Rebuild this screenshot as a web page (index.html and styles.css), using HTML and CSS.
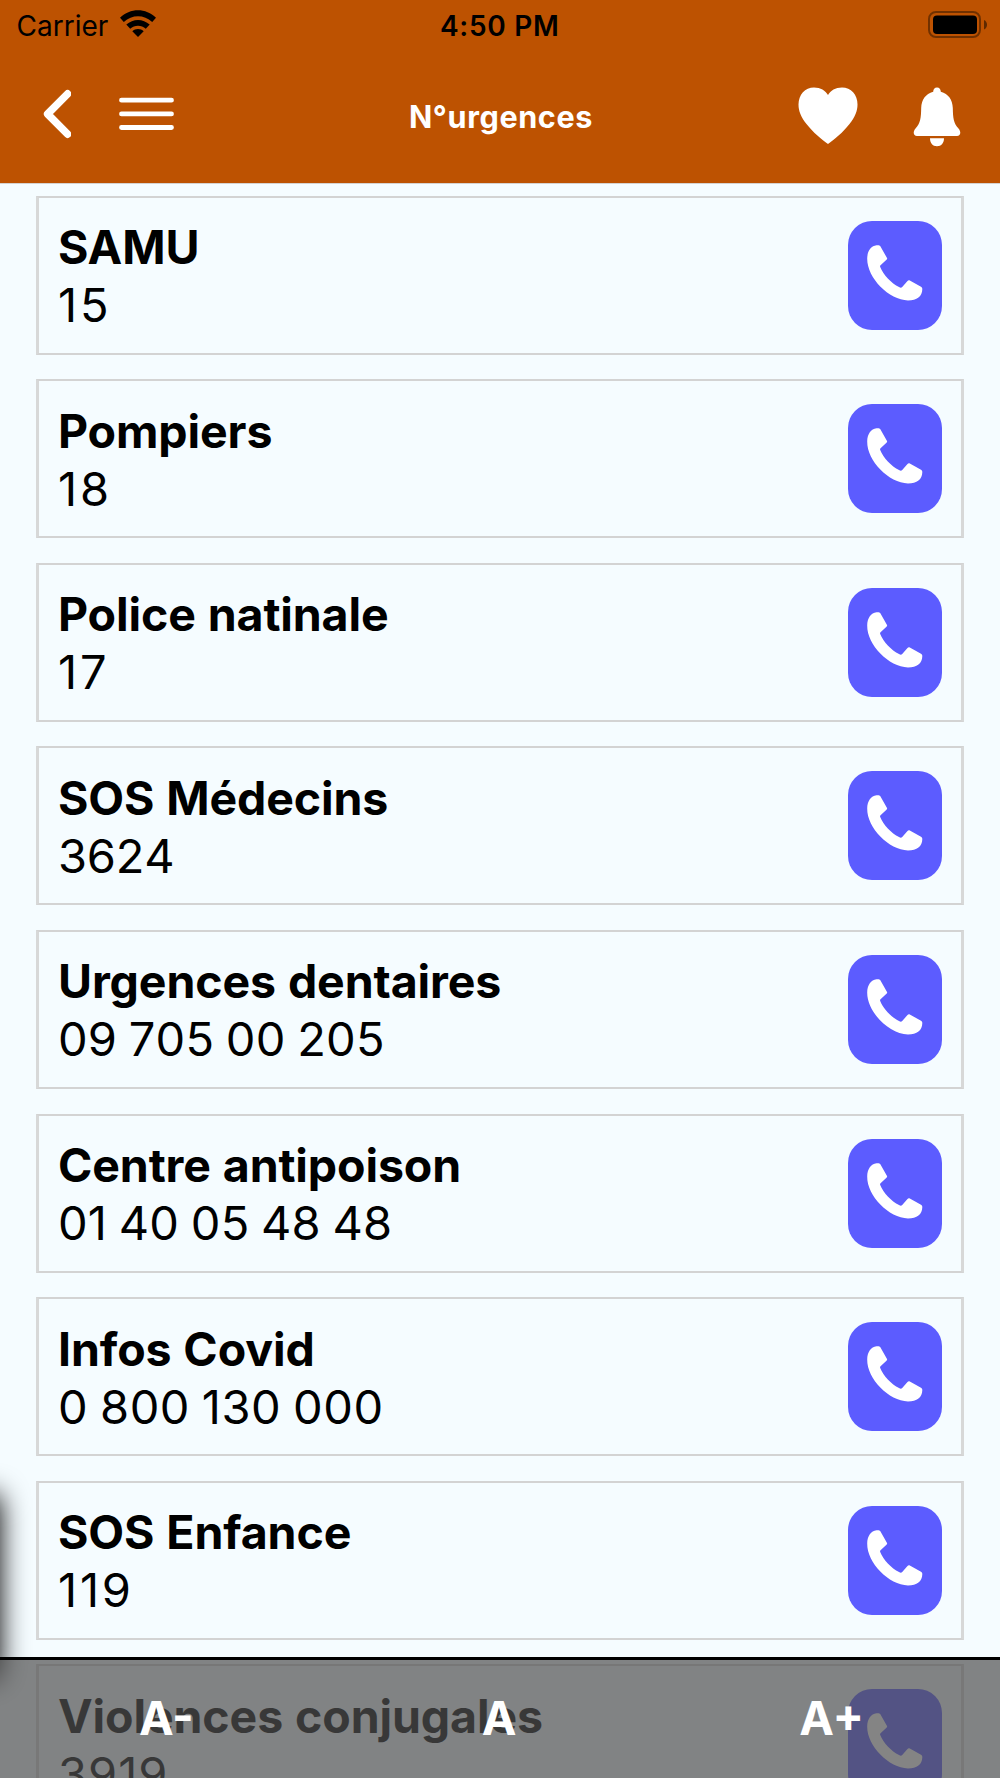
FILE: index.html
```html
<!DOCTYPE html>
<html lang="fr">
<head>
<meta charset="utf-8">
<title>N°urgences</title>
<link rel="stylesheet" href="styles.css">
</head>
<body>
<svg class="defs" width="0" height="0">
  <symbol id="phone" viewBox="0 0 56 56">
    <path d="M9.500 0.300 C11 0 12.600 0.100 13.200 1 L20 13 C20.300 13.600 20.200 14.100 19.700 14.600 L13.300 20.500 C13 20.900 13 21.500 13.200 22 C16 29.500 24.500 38.500 32 42 C33.300 42.900 34.300 42.900 35 42.200 L40.500 36 C41.200 35.200 42 35.100 42.800 35.500 L54 41.800 C55 42.400 55.300 43 55.300 44.200 C55.200 51.500 50 55.400 41 55.400 C22 55 0 33 0.200 13.500 C0.300 6 4 1 9.500 0.300Z"/>
  </symbol>
</svg>
<div class="screen">
  <header class="header">
    <div class="status">
      <div class="carrier">
        <span>Carrier</span>
        <svg class="wifi" width="38" height="28" viewBox="0 0 38 28">
          <path d="M1 7.800C11 -2.400 27 -2.400 37 7.800L33.200 12C25 4.200 13 4.200 4.800 12Z"/>
          <path d="M7.300 14.600C14 8.300 24 8.300 30.700 14.600L26.800 18.800C22.500 14.800 15.500 14.800 11.200 18.800Z"/>
          <path d="M13.300 21.200C16.300 18.400 21.700 18.400 24.700 21.200L19 27Z"/>
        </svg>
      </div>
      <span class="time">4:50 PM</span>
      <svg class="battery" width="60" height="28" viewBox="0 0 60 28">
        <rect class="battery-case" x="1" y="1" width="51" height="25" rx="7"/>
        <rect x="5" y="4.500" width="44" height="18.500" rx="4"/>
        <path class="battery-cap" d="M56 9C60 10.500 60 17 56 18.500Z"/>
      </svg>
    </div>
    <nav class="nav">
      <div class="nav-left">
        <svg class="back" width="30" height="50" viewBox="0 0 30 50"><path d="M26.600 4.800 6.600 25 26.600 45.200"/></svg>
        <svg class="menu" width="55" height="34" viewBox="0 0 55 34"><path d="M2.500 3.200H52.500M2.500 16.900H52.500M2.500 30.500H52.500"/></svg>
      </div>
      <h1 class="title">N°urgences</h1>
      <div class="nav-right">
        <svg width="60" height="58" viewBox="0 0 60 58"><path d="M30 57 C24 52.500 15 45.500 8.500 37 C3 30 0.500 24 0.500 17.500 C0.500 7.500 7 0.500 16 0.500 C22.500 0.500 27.500 3.500 30 8 C32.500 3.500 37.500 0.500 44 0.500 C53 0.500 59.500 7.500 59.500 17.500 C59.500 24 57 30 51.500 37 C45 45.500 36 52.500 30 57Z"/></svg>
        <svg width="48" height="60" viewBox="0 0 48 60"><path d="M24 0.500C26.500 0.500 27.700 2.200 27.800 4.800C35.500 6.800 39.500 13 39.800 21C40 31 40.500 36 45.500 41.500C48.500 45 47.500 49 44 49H4C0.500 49-0.500 45 2.500 41.500C7.500 36 8 31 8.200 21C8.500 13 12.500 6.800 20.200 4.800C20.300 2.200 21.500 0.500 24 0.500ZM17 51.300H31C31 56 28.500 59.300 24 59.300S17 56 17 51.300Z"/></svg>
      </div>
    </nav>
  </header>

  <main class="list">
    <article class="card"><div><h2>SAMU</h2><p class="wide">15</p></div><a class="call"><svg><use href="#phone"/></svg></a></article>
    <article class="card"><div><h2>Pompiers</h2><p class="wide">18</p></div><a class="call"><svg><use href="#phone"/></svg></a></article>
    <article class="card"><div><h2>Police natinale</h2><p class="wide">17</p></div><a class="call"><svg><use href="#phone"/></svg></a></article>
    <article class="card"><div><h2>SOS Médecins</h2><p class="short">3624</p></div><a class="call"><svg><use href="#phone"/></svg></a></article>
    <article class="card"><div><h2>Urgences dentaires</h2><p>09 705 00 205</p></div><a class="call"><svg><use href="#phone"/></svg></a></article>
    <article class="card"><div><h2>Centre antipoison</h2><p>01 40 05 48 48</p></div><a class="call"><svg><use href="#phone"/></svg></a></article>
    <article class="card"><div><h2>Infos Covid</h2><p class="loose">0 800 130 000</p></div><a class="call"><svg><use href="#phone"/></svg></a></article>
    <article class="card"><div><h2>SOS Enfance</h2><p class="wide">119</p></div><a class="call"><svg><use href="#phone"/></svg></a></article>
    <article class="card"><div><h2>Violences conjugales</h2><p class="medium">3919</p></div><a class="call"><svg><use href="#phone"/></svg></a></article>
  </main>

  <div class="drawer-shadow"></div>
  <footer class="font-bar"><span>A-</span><span>A</span><span>A+</span></footer>
</div>
</body>
</html>
```
FILE: styles.css
```css
* { box-sizing: border-box; margin: 0; padding: 0; }
body { background: #f5fcff; font-family: Inter, "Liberation Sans", sans-serif; color: #000; }
svg { display: block; flex: none; }
.defs { position: absolute; }
.screen { position: relative; width: 1000px; height: 1778px; overflow: hidden; }

.header { height: 184px; background: #bd5201; border-bottom: 1px solid #d5d2d0; background-clip: padding-box; }
.status { display: grid; grid-template-columns: 1fr auto 1fr; align-items: center; height: 51px; padding: 0 12px 0 16.500px; }
.carrier { display: flex; align-items: center; gap: 11px; font-size: 28px; }
.wifi { margin-top: -3px; }
.time { font-size: 28px; font-weight: 600; letter-spacing: 0.700px; padding-right: 5px; }
.battery { justify-self: end; margin-top: -2px; }
.battery-case { fill: none; stroke: #000; stroke-opacity: 0.400; stroke-width: 2; }
.battery-cap { fill-opacity: 0.500; }
.nav { display: grid; grid-template-columns: 1fr auto 1fr; align-items: center; height: 132px; padding: 0 39px 0 41px; }
.nav-left { display: flex; align-items: center; gap: 48px; margin-top: -7px; }
.back path, .menu path { fill: none; stroke: #fff; stroke-linecap: round; stroke-linejoin: round; }
.back path { stroke-width: 7.500; }
.menu path { stroke-width: 4.800; }
.title { margin-top: -2px; color: #fff; font-size: 30.600px; font-weight: 700; letter-spacing: 0.600px; }
.nav-right { display: flex; justify-content: flex-end; gap: 55px; fill: #fff; }

.list { display: flex; flex-direction: column; gap: 24.600px; padding: 11.600px 36px 0; }
.card { display: flex; justify-content: space-between; align-items: flex-start; flex: none; height: 159px; padding: 20.500px 19px 0 19px; border: 2px solid #d3d3d3; border-left: 3px solid #d7d8d8; border-right: 3px solid #d7d8d8; }
.card h2, .card p { font-size: 46.500px; line-height: 58px; }
.card h2 { font-weight: 700; letter-spacing: -0.120px; word-spacing: 1px; }
.card p { font-size: 47px; font-weight: 400; font-kerning: none; letter-spacing: 0.200px; word-spacing: -1.800px; }
.card .short { letter-spacing: -0.200px; }
.card .loose { letter-spacing: 0.500px; }
.card .medium { letter-spacing: 1px; }
.card .wide { letter-spacing: 2.800px; }
.call { display: block; width: 94px; height: 109px; margin-top: 2.500px; padding: 24px 0 0 19px; border-radius: 24px; background: #5c5cff; }
.call svg { width: 56px; height: 56px; fill: #fff; }

.drawer-shadow { position: absolute; left: -100px; top: 1494px; width: 100px; height: 186px; border-radius: 8px; box-shadow: 0 0 28px #000; }
.font-bar { position: absolute; left: 0; right: 0; bottom: 0; height: 121px; display: grid; grid-template-columns: repeat(3, 1fr); padding-right: 2px; border-top: 3px solid #000; background: rgba(80, 80, 80, 0.700); background-clip: padding-box; }
.font-bar span { padding-top: 29px; text-align: center; color: #fff; font-size: 46.500px; line-height: 58px; font-weight: 700; }
```
